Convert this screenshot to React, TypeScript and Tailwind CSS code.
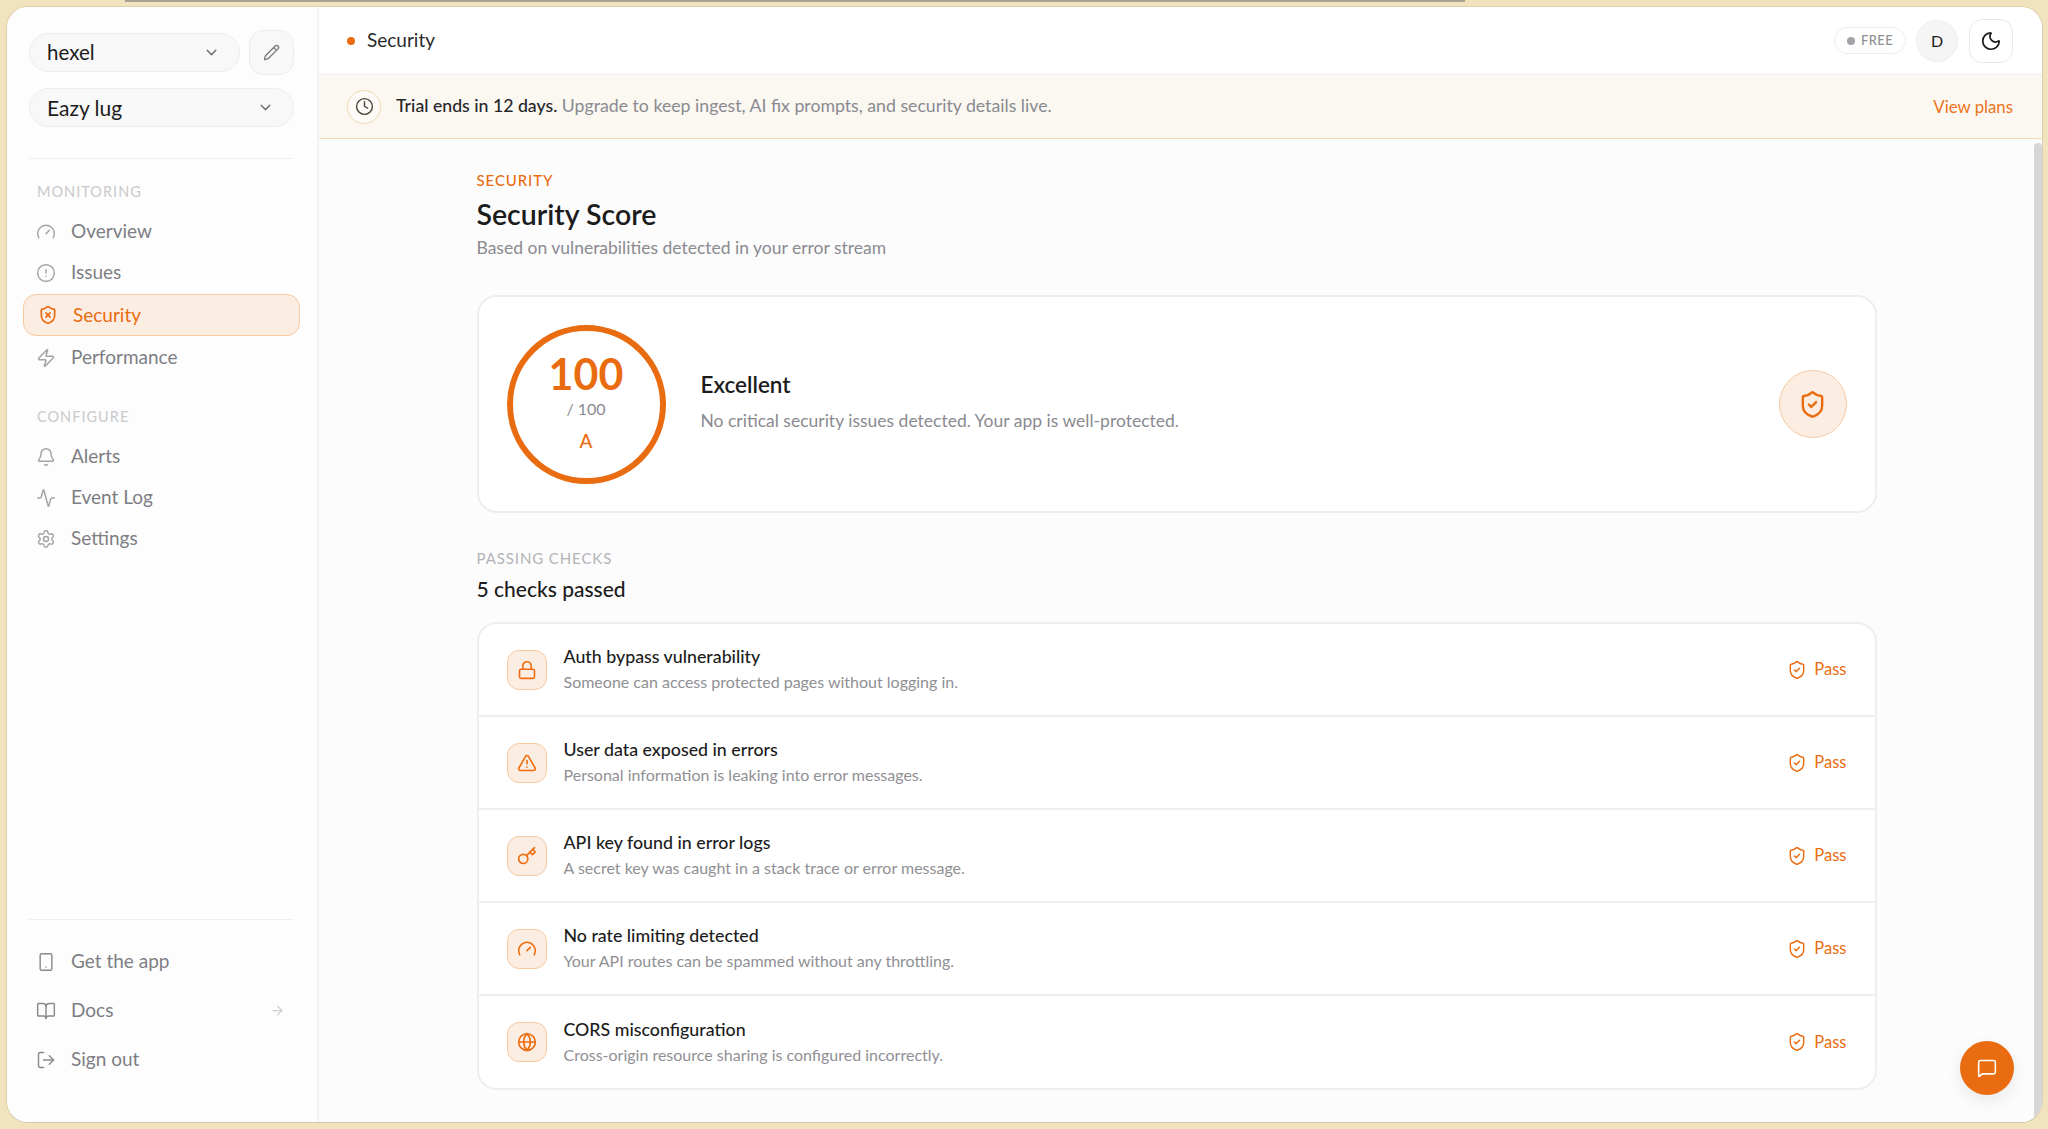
import {
  Activity,
  ArrowRight,
  Bell,
  BookOpen,
  ChevronDown,
  CircleAlert,
  Clock,
  Gauge,
  Globe,
  Key,
  Lock,
  LogOut,
  MessageSquare,
  Moon,
  Pencil,
  Settings,
  ShieldCheck,
  ShieldX,
  Smartphone,
  TriangleAlert,
  Zap,
} from "lucide-react";
import type { ComponentType } from "react";

type Icon = ComponentType<{ className?: string; strokeWidth?: number }>;

const monitoring: { label: string; icon: Icon; active?: boolean }[] = [
  { label: "Overview", icon: Gauge },
  { label: "Issues", icon: CircleAlert },
  { label: "Security", icon: ShieldX, active: true },
  { label: "Performance", icon: Zap },
];

const configure: { label: string; icon: Icon }[] = [
  { label: "Alerts", icon: Bell },
  { label: "Event Log", icon: Activity },
  { label: "Settings", icon: Settings },
];

const checks: { title: string; desc: string; icon: Icon }[] = [
  { title: "Auth bypass vulnerability", desc: "Someone can access protected pages without logging in.", icon: Lock },
  { title: "User data exposed in errors", desc: "Personal information is leaking into error messages.", icon: TriangleAlert },
  { title: "API key found in error logs", desc: "A secret key was caught in a stack trace or error message.", icon: Key },
  { title: "No rate limiting detected", desc: "Your API routes can be spammed without any throttling.", icon: Gauge },
  { title: "CORS misconfiguration", desc: "Cross-origin resource sharing is configured incorrectly.", icon: Globe },
];

function NavItem({ label, icon: IconCmp, active }: { label: string; icon: Icon; active?: boolean }) {
  if (active) {
    return (
      <div className="-mx-[6px] my-[1px] flex h-[42px] items-center gap-[15px] rounded-[13px] border border-[#f6c9a0] bg-[#fcede3] pl-[14px] text-[19px] text-[#ea6c10]">
        <IconCmp className="h-[20px] w-[20px]" strokeWidth={2} />
        <span>{label}</span>
      </div>
    );
  }
  return (
    <div className="flex h-[41px] items-center gap-[15px] pl-[7px] text-[19px] text-[#7d7d84]">
      <IconCmp className="h-[20px] w-[20px] text-[#a3a3a8]" strokeWidth={1.75} />
      <span>{label}</span>
    </div>
  );
}

function SectionLabel({ children }: { children: string }) {
  return <div className="ml-[8px] h-[18px] text-[14.5px] leading-[18px] tracking-[0.07em] text-[#c9c9cc]">{children}</div>;
}

function Sidebar() {
  return (
    <aside className="flex w-[312px] shrink-0 flex-col border-r-2 border-[#f2f2f2] bg-[#fdfdfd] pb-[38px] pl-[22px] pr-[23px] pt-[23px]">
      <div className="flex h-[45px] items-center gap-[9px]">
        <div className="flex h-[39px] w-[211px] items-center justify-between rounded-full border border-[#ececec] bg-[#f8f8f8] pl-[17px] pr-[19px] text-[20.5px] text-[#1c1c1c]">
          <span>hexel</span>
          <ChevronDown className="h-[17px] w-[17px] text-[#77777c]" />
        </div>
        <div className="flex h-[45px] w-[45px] items-center justify-center rounded-[14px] border border-[#ececec] bg-[#f8f8f8]">
          <Pencil className="h-[17px] w-[17px] text-[#77777c]" strokeWidth={1.75} />
        </div>
      </div>
      <div className="mt-[13px] flex h-[39px] items-center justify-between rounded-full border border-[#ececec] bg-[#f8f8f8] pl-[17px] pr-[19px] text-[21px] text-[#1c1c1c]">
        <span>Eazy lug</span>
        <ChevronDown className="h-[17px] w-[17px] text-[#77777c]" />
      </div>
      <div className="mt-[31px] h-px bg-[#efefef]" />

      <div className="mt-[24px] mb-[10px]">
        <SectionLabel>MONITORING</SectionLabel>
      </div>
      {monitoring.map((item) => (
        <NavItem key={item.label} {...item} />
      ))}

      <div className="mt-[30px] mb-[10px]">
        <SectionLabel>CONFIGURE</SectionLabel>
      </div>
      {configure.map((item) => (
        <NavItem key={item.label} {...item} />
      ))}

      <div className="mt-auto h-px bg-[#efefef]" />
      <div className="mt-[17px]">
        <div className="flex h-[49px] items-center gap-[15px] pl-[7px] text-[19px] text-[#7d7d84]">
          <Smartphone className="h-[20px] w-[20px] text-[#8a8a90]" strokeWidth={1.75} />
          <span>Get the app</span>
        </div>
        <div className="flex h-[49px] items-center gap-[15px] pl-[7px] pr-[9px] text-[19px] text-[#7d7d84]">
          <BookOpen className="h-[20px] w-[20px] text-[#8a8a90]" strokeWidth={1.75} />
          <span>Docs</span>
          <ArrowRight className="ml-auto h-[15px] w-[15px] text-[#cfcfd2]" />
        </div>
        <div className="flex h-[49px] items-center gap-[15px] pl-[7px] text-[19px] text-[#7d7d84]">
          <LogOut className="h-[20px] w-[20px] text-[#8a8a90]" strokeWidth={1.75} />
          <span>Sign out</span>
        </div>
      </div>
    </aside>
  );
}

function TopBar() {
  return (
    <>
      <header className="flex h-[68px] shrink-0 items-center border-b border-[#efefef] bg-white pl-[28px] pr-[29px]">
        <span className="h-[8px] w-[8px] rounded-full bg-[#ea6c10]" />
        <span className="ml-[12px] text-[19px] text-[#2a2a2a]">Security</span>
        <div className="ml-auto flex h-[27px] w-[72px] items-center justify-center gap-[6px] rounded-full border border-[#ededed] bg-white text-[13px] font-medium tracking-[0.03em] text-[#8f8f94]">
          <span className="h-[8px] w-[8px] rounded-full bg-[#a3a3a8]" />
          FREE
        </div>
        <div className="ml-[10px] flex h-[42px] w-[42px] items-center justify-center rounded-full border border-[#eeeeee] bg-[#f5f5f5] text-[16px] text-[#1c1c1c]">D</div>
        <div className="ml-[11px] flex h-[44px] w-[44px] items-center justify-center rounded-[13px] border border-[#e8e8e8] bg-white">
          <Moon className="h-[22px] w-[22px] text-[#1c1c1c]" strokeWidth={1.9} />
        </div>
      </header>
      <div className="flex h-[64px] shrink-0 items-center border-b border-[#f5d9a8] bg-[#fbf8f2] pl-[28px] pr-[29px]">
        <div className="flex h-[34px] w-[34px] items-center justify-center rounded-full border border-[#eed9b4] bg-[#fdfbf7]">
          <Clock className="h-[19px] w-[19px] text-[#4a4238]" strokeWidth={1.75} />
        </div>
        <div className="ml-[15px] text-[17.7px] text-[#8a8a90]">
          <span className="font-medium text-[#26262a]">Trial ends in 12 days.</span> Upgrade to keep ingest, AI fix prompts, and security details live.
        </div>
        <div className="ml-auto text-[16.8px] text-[#ee7420]">View plans</div>
      </div>
    </>
  );
}

function ScoreCard() {
  return (
    <div className="mt-[35px] flex h-[218px] items-center rounded-[20px] border-2 border-[#eeeeee] bg-white pl-[28px] pr-[28px]">
      <div className="flex h-[159px] w-[159px] shrink-0 flex-col items-center rounded-full border-[6px] border-[#ea6c10] pt-[17px]">
        <div className="text-[43px] font-bold leading-[52px] text-[#ea6c10]">100</div>
        <div className="-mt-[2px] text-[16px] leading-[22px] text-[#8a8a90]">/ 100</div>
        <div className="mt-[10px] text-[19px] font-medium leading-[22px] text-[#ea6c10]">A</div>
      </div>
      <div className="ml-[35px] pb-[4px]">
        <div className="text-[22.5px] font-semibold leading-[28px] text-[#1c1c1c]">Excellent</div>
        <div className="mt-[10px] text-[17.5px] leading-[24px] text-[#8a8a90]">No critical security issues detected. Your app is well-protected.</div>
      </div>
      <div className="ml-auto flex h-[68px] w-[68px] items-center justify-center rounded-full border border-[#f6c9a0] bg-[#fcede3]">
        <ShieldCheck className="h-[29px] w-[29px] text-[#ea6c10]" strokeWidth={2} />
      </div>
    </div>
  );
}

function CheckRow({ title, desc, icon: IconCmp, last }: { title: string; desc: string; icon: Icon; last: boolean }) {
  return (
    <div className={last ? "flex h-[92px] items-center pl-[28px] pr-[28px]" : "flex h-[93px] items-center border-b-2 border-[#eeeeee] pl-[28px] pr-[28px]"}>
      <div className="flex h-[40px] w-[40px] shrink-0 items-center justify-center rounded-[12px] border border-[#f6c9a0] bg-[#fcede3]">
        <IconCmp className="h-[20px] w-[20px] text-[#ee6c0e]" strokeWidth={1.9} />
      </div>
      <div className="ml-[17px] pb-[2px]">
        <div className="text-[17.8px] font-medium leading-[24px] text-[#1c1c1c]">{title}</div>
        <div className="mt-[3px] text-[16px] leading-[22px] text-[#8f8f94]">{desc}</div>
      </div>
      <div className="ml-auto flex items-center gap-[7px] text-[16.5px] text-[#ea6c10]">
        <ShieldCheck className="h-[20px] w-[20px]" strokeWidth={1.75} />
        Pass
      </div>
    </div>
  );
}

export default function App() {
  return (
    <div className="relative flex h-[1129px] w-[2048px] overflow-hidden bg-[#f1e3bd] pb-[6px] pl-[6px] pr-[5px] pt-[6px] font-['Lato',sans-serif]">
      {/* sliver of the window behind */}
      <div className="absolute left-[125px] top-0 h-[2px] w-[1340px] bg-[#a8a294]" />

      <div className="flex min-w-0 flex-1 overflow-hidden rounded-[22px] border border-[#dccfa9] border-b-[#cfc8b0] bg-white">
        <Sidebar />
        <div className="flex min-w-0 flex-1 flex-col">
          <TopBar />
          <div className="relative flex min-h-0 flex-1 bg-[#fcfcfc]">
            <main className="min-w-0 flex-1">
              <div className="mx-auto w-[1400px] pt-[32px]">
                <div className="h-[18px] text-[15px] font-medium leading-[18px] tracking-[0.06em] text-[#ea6c10]">SECURITY</div>
                <h1 className="mt-[7px] text-[28.5px] font-semibold leading-[36px] text-[#1c1c1c]">Security Score</h1>
                <p className="mt-[4px] text-[17.5px] leading-[24px] text-[#8a8a90]">Based on vulnerabilities detected in your error stream</p>
                <ScoreCard />
                <div className="mt-[36px] h-[18px] text-[15px] leading-[18px] tracking-[0.06em] text-[#b3b3b7]">PASSING CHECKS</div>
                <div className="mt-[8px] text-[21px] font-medium leading-[28px] text-[#1c1c1c]">5 checks passed</div>
                <div className="mt-[19px] overflow-hidden rounded-[20px] border-2 border-[#eeeeee] bg-white">
                  {checks.map((check, i) => (
                    <CheckRow key={check.title} {...check} last={i === checks.length - 1} />
                  ))}
                </div>
              </div>
            </main>
            <div className="w-[8px] shrink-0 pt-[4px]">
              <div className="h-full rounded-full bg-[#d6d6d6]" />
            </div>
            {/* chat launcher */}
            <button className="absolute bottom-[27px] right-[28px] flex h-[54px] w-[54px] items-center justify-center rounded-full bg-[#ea6c10] shadow-[0_6px_16px_rgba(0,0,0,0.08)]">
              <MessageSquare className="h-[20px] w-[20px] text-white" strokeWidth={1.9} />
            </button>
          </div>
        </div>
      </div>
    </div>
  );
}
